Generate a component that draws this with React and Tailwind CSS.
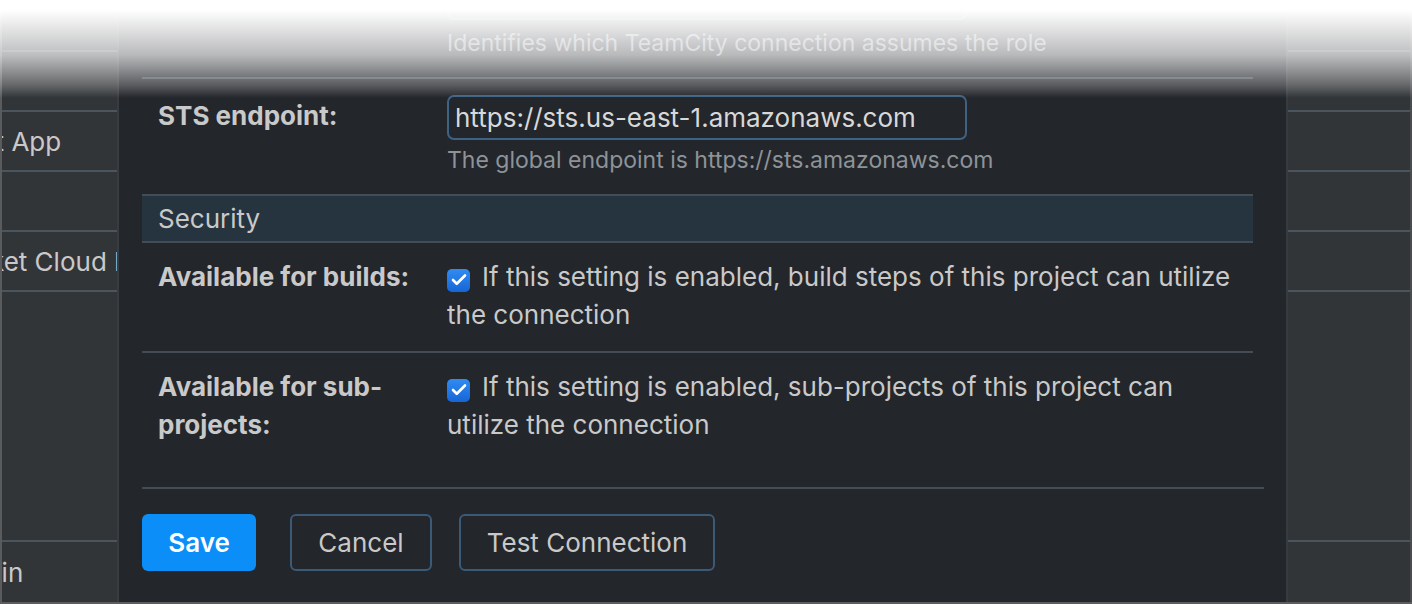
import { Check } from "lucide-react";

// background list rows, seen on both sides of the dialog
const ROWS = [
  { h: "h-[52px]", text: "" },
  { h: "h-[60px]", text: "" },
  { h: "h-[60px]", text: "Slack Bot App", shift: "-ml-[113px]" },
  { h: "h-[60px]", text: "" },
  { h: "h-[60px]", text: "Bitbucket Cloud Issue Tracker", shift: "-ml-[90px]" },
  { h: "h-[250px]", text: "" },
  { h: "h-[60px]", text: "Perforce Admin", shift: "-ml-[170px]", last: true },
];

function SideColumn({ side }) {
  return (
    <div
      className={`flex flex-col overflow-hidden ${
        side === "left"
          ? "w-[117px] border-l-2 border-[#5a5b5d]"
          : "w-[124px] border-r-2 border-[#4a4c4f]"
      }`}
    >
      {ROWS.map((row, i) => (
        <div
          key={i}
          className={`${row.h} shrink-0 flex items-center whitespace-nowrap ${
            row.last ? "" : "border-b-2 border-[#4b555d]"
          }`}
        >
          {side === "left" && row.text && (
            <span className={`${row.shift} text-[26px] text-[#c9c9c9]`}>
              {row.text}
            </span>
          )}
        </div>
      ))}
    </div>
  );
}

function Checkbox() {
  return (
    <span className="mr-[12px] inline-flex h-[23px] w-[23px] translate-y-[3px] items-center justify-center rounded-[5px] bg-gradient-to-b from-[#2f8cf3] to-[#1765d6] align-baseline">
      <Check size={18} strokeWidth={3.5} color="#ffffff" />
    </span>
  );
}

function Row({ label, children }) {
  return (
    <div className="grid grid-cols-[289px_1fr] pl-[16px] pr-[18px]">
      <div className="pr-4 text-[26px] font-bold leading-[38px] text-[#c9c9c9]">
        {label}
      </div>
      <div>{children}</div>
    </div>
  );
}

export default function App() {
  return (
    <div className="relative h-[604px] w-[1412px] overflow-hidden border-b-2 border-[#5b5d5f] bg-[#323538] font-['Inter','Liberation_Sans',sans-serif]">
      <div className="flex h-full">
        <SideColumn side="left" />

        {/* dialog, scrolled to its bottom */}
        <div className="flex-1 overflow-hidden border-x-2 border-[#383b3f] bg-[#23262b] pl-[23px] pr-[22px]">
          <div className="-mt-[25px] mr-[11px] border-b-2 border-[#444d55] pb-[20px] pl-[305px]">
            <div className="h-[45px] w-[520px] rounded-[7px] border-2 border-[#3d6283]" />
            <p className="mt-[10px] text-[23px] leading-[27px] text-[#8e9398]">
              Identifies which TeamCity connection assumes the role
            </p>
          </div>

          <div className="mr-[11px]">
            <div className="grid grid-cols-[289px_1fr] border-b-2 border-[#444d55] pl-[16px] pt-[16px] pb-[20px]">
              <div className="pt-[2px] text-[26px] font-bold leading-[38px] text-[#c9c9c9]">
                STS endpoint:
              </div>
              <div>
                <div className="flex h-[45px] w-[520px] items-center rounded-[7px] border-2 border-[#3d6283] px-[6px] text-[26px] text-[#d8d8d8]">
                  https://sts.us-east-1.amazonaws.com
                </div>
                <p className="mt-[6px] text-[23px] leading-[28px] text-[#8e9398]">
                  The global endpoint is https://sts.amazonaws.com
                </p>
              </div>
            </div>

            <div className="flex h-[47px] items-center border-b-2 border-[#444d55] bg-[#263440] pl-[16px] text-[26px] text-[#c9c9c9]">
              Security
            </div>

            <div className="border-b-2 border-[#444d55] pt-[15px] pb-[17px]">
              <Row label="Available for builds:">
                <p className="text-[26px] leading-[38px] text-[#c9c9c9]">
                  <Checkbox />
                  If this setting is enabled, build steps of this project can utilize
                  the connection
                </p>
              </Row>
            </div>

            <div className="pt-[15px] pb-[17px]">
              <Row label="Available for sub-projects:">
                <p className="text-[26px] leading-[38px] text-[#c9c9c9]">
                  <Checkbox />
                  If this setting is enabled, sub-projects of this project can
                  utilize the connection
                </p>
              </Row>
            </div>
          </div>

          <div className="mt-[26px] flex items-center border-t-2 border-[#444d55] pt-[25px]">
            <button className="h-[57px] w-[114px] rounded-[6px] bg-[#0b8ef7] text-[26px] font-semibold text-white">
              Save
            </button>
            <button className="ml-[34px] h-[57px] w-[142px] rounded-[6px] border-2 border-[#3b5a78] text-[26px] text-[#c9c9c9]">
              Cancel
            </button>
            <button className="ml-[27px] h-[57px] w-[256px] rounded-[6px] border-2 border-[#3b5a78] text-[26px] text-[#c9c9c9]">
              Test Connection
            </button>
          </div>
        </div>

        <SideColumn side="right" />
      </div>

      {/* white fade over the top edge */}
      <div className="pointer-events-none absolute inset-x-0 top-0 h-[98px] bg-[linear-gradient(to_bottom,#ffffff_10px,rgba(255,255,255,0.86)_30px,rgba(255,255,255,0.68)_55px,rgba(255,255,255,0.47)_70px,rgba(255,255,255,0.25)_85px,transparent_98px)]" />
    </div>
  );
}
